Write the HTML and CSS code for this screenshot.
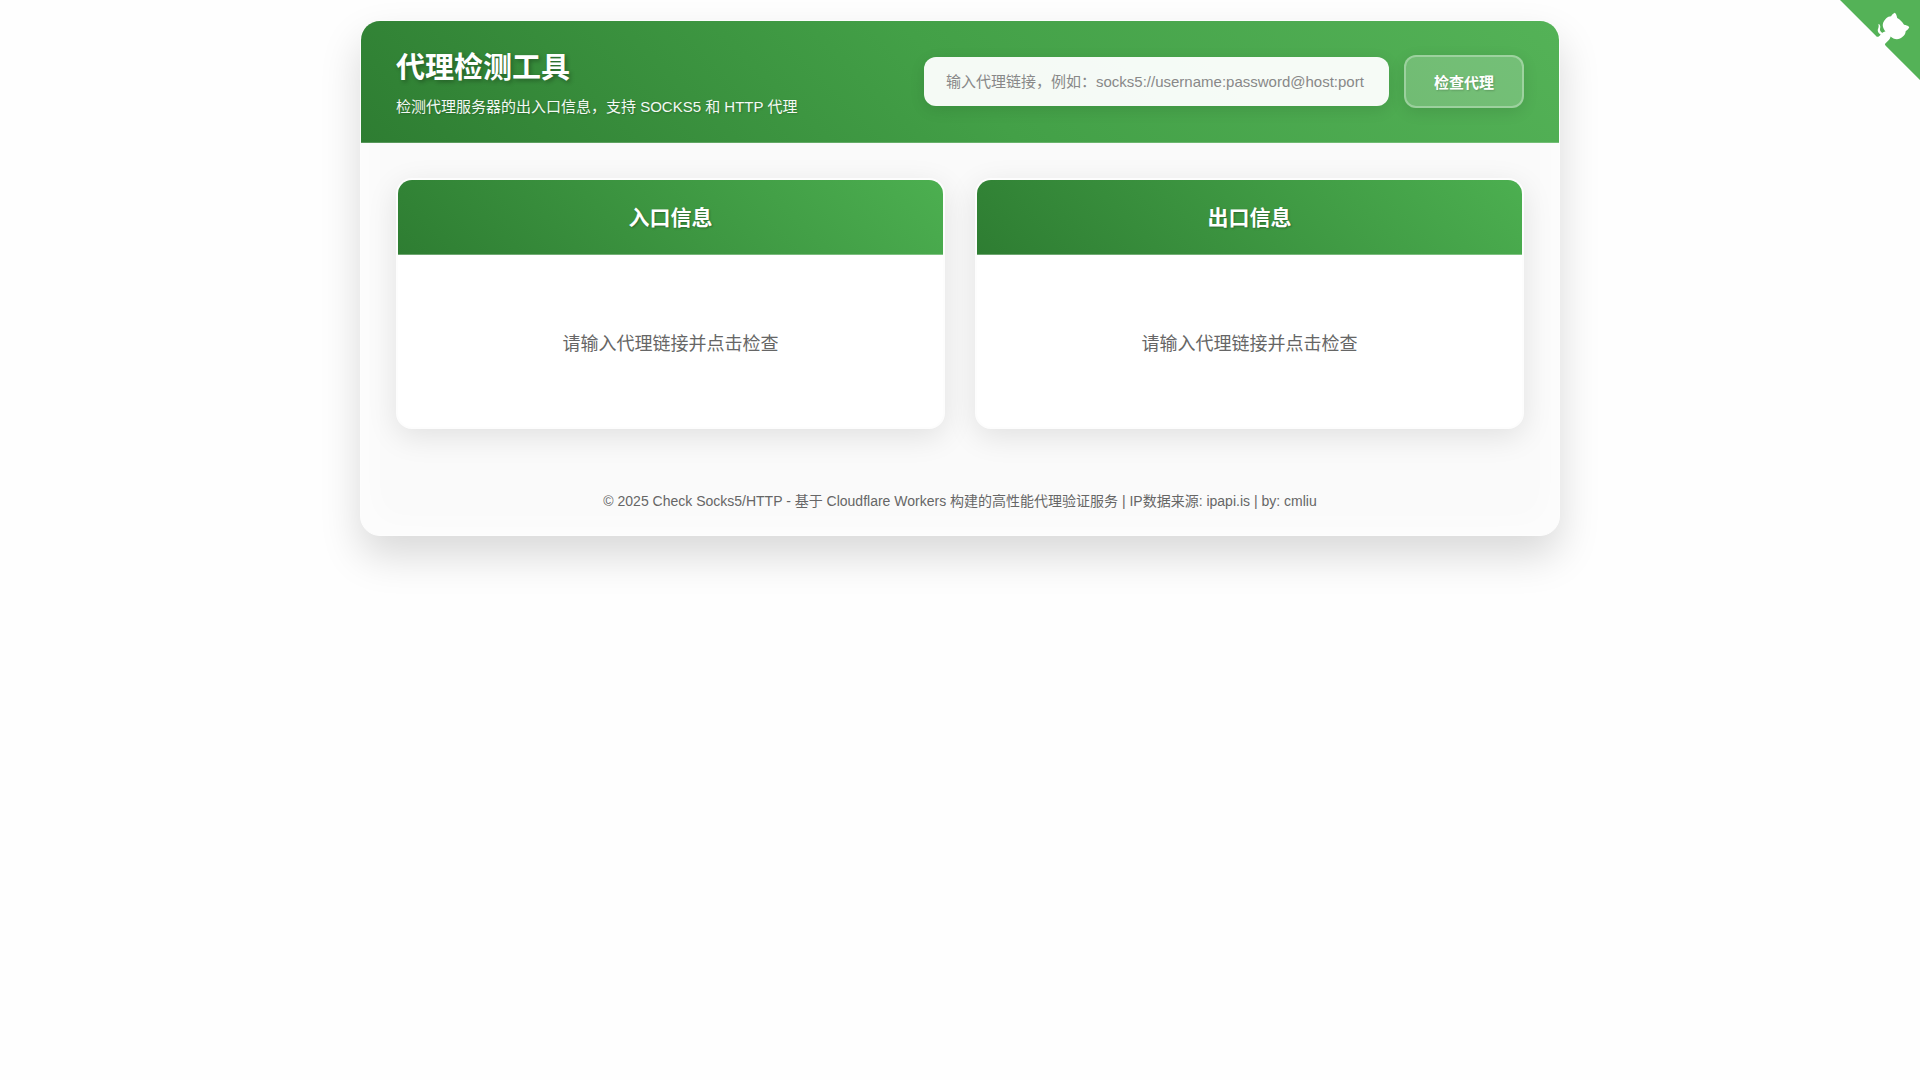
FILE: index.html
```html
<!DOCTYPE html>
<html lang="zh-CN">
<head>
<meta charset="UTF-8">
<meta name="viewport" content="width=device-width, initial-scale=1">
<title>代理检测工具</title>
<link rel="stylesheet" href="styles.css">
</head>
<body>
<a href="#" class="github-corner" aria-label="View source on Github">
<svg width="80" height="80" viewBox="0 0 250 250" aria-hidden="true"><path d="M0,0 L115,115 L130,115 L142,142 L250,250 L250,0 Z"/><path class="cat" d="M128.3,109.0 C113.8,99.7 119.0,89.6 119.0,89.6 C122.0,82.7 120.5,78.6 120.5,78.6 C119.2,72.0 123.4,76.3 123.4,76.3 C127.3,80.9 125.5,87.3 125.5,87.3 C122.9,97.6 130.6,101.9 134.4,103.2"/><path class="cat" d="M115.0,115.0 C114.9,115.1 118.7,116.5 119.8,115.4 L133.7,101.6 C136.9,99.2 139.9,98.4 142.2,98.6 C133.8,88.0 127.5,74.4 143.8,58.0 C148.5,53.4 154.0,51.2 159.7,51.0 C160.3,49.4 163.2,43.6 171.4,40.1 C171.4,40.1 176.1,42.5 178.8,56.2 C183.1,58.6 187.2,61.8 190.9,65.4 C194.5,69.0 197.7,73.2 200.1,77.6 C213.8,80.2 216.3,84.9 216.3,84.9 C212.7,93.1 206.9,96.0 205.4,96.6 C205.1,102.4 203.0,107.8 198.3,112.5 C181.9,128.9 168.3,122.5 157.7,114.1 C157.9,116.9 156.7,120.9 152.7,124.9 L141.0,136.5 C139.8,137.7 141.6,141.9 141.8,141.8 Z"/></svg>
</a>
<main class="container">
<header class="header">
<div class="titles">
<h1>代理检测工具</h1>
<p>检测代理服务器的出入口信息，支持 SOCKS5 和 HTTP 代理</p>
</div>
<form class="search">
<input type="text" class="link-input" aria-label="代理链接" placeholder="输入代理链接，例如：socks5://username:password@host:port">
<button type="button" class="check">检查代理</button>
</form>
</header>
<div class="results">
<section class="card"><h2>入口信息</h2><p>请输入代理链接并点击检查</p></section>
<section class="card"><h2>出口信息</h2><p>请输入代理链接并点击检查</p></section>
</div>
<footer class="footer">© 2025 Check Socks5/HTTP - 基于 Cloudflare Workers 构建的高性能代理验证服务 | IP数据来源: ipapi.is | by: cmliu</footer>
</main>
</body>
</html>
```
FILE: styles.css
```css
* { box-sizing: border-box; margin: 0; padding: 0; }
body {
  min-height: 100vh;
  padding: 20px;
  background: #fefefe;
  color: #666;
  font-family: "Liberation Sans", "Noto Sans CJK SC", sans-serif;
}
.container {
  max-width: 1200px;
  margin: 0 auto;
  overflow: hidden;
  border: 1px solid #fdfdfd;
  border-radius: 20px;
  background: #fafafa;
  box-shadow: 0 20px 40px rgba(0, 0, 0, 0.15), inset 0 0 40px #fefefe;
}
.header {
  display: flex;
  align-items: center;
  justify-content: space-between;
  gap: 30px;
  padding: 25px 35px;
  border-bottom: 1px solid rgba(255, 255, 255, 0.2);
  background: linear-gradient(45deg, #2e7d32, #43a047 50%, #54b257) border-box;
  color: #fff;
}
.titles h1 {
  margin-bottom: 6px;
  font-size: 29px;
  line-height: 45px;
  text-shadow: 2px 2px 4px rgba(0, 0, 0, 0.3);
}
.titles p {
  font-size: 15px;
  line-height: 20px;
  opacity: 0.95;
  text-shadow: 1px 1px 2px rgba(0, 0, 0, 0.2);
}
.search { display: flex; align-items: center; gap: 15px; width: 600px; }
.link-input {
  flex: 1;
  min-width: 0;
  height: 49px;
  padding: 0 22px;
  border: 0;
  border-radius: 12px;
  background: rgba(255, 255, 255, 0.95);
  box-shadow: 0 4px 15px rgba(0, 0, 0, 0.1);
  font: 15px "Liberation Sans", "Noto Sans CJK SC", sans-serif;
}
.link-input::placeholder { color: #888; }
.check {
  width: 120px;
  height: 53px;
  border: 2px solid rgba(255, 255, 255, 0.3);
  border-radius: 12px;
  background: rgba(255, 255, 255, 0.2);
  color: #fff;
  font: bold 15px "Liberation Sans", "Noto Sans CJK SC", sans-serif;
  text-shadow: 1px 1px 2px rgba(0, 0, 0, 0.2);
  box-shadow: 0 4px 15px rgba(0, 0, 0, 0.1);
}
.results {
  display: grid;
  grid-template-columns: 1fr 1fr;
  gap: 30px;
  padding: 35px;
}
.card {
  overflow: hidden;
  border: 2px solid #fdfdfd;
  border-radius: 16px;
  background: #fff;
  box-shadow: 0 8px 30px rgba(0, 0, 0, 0.1);
  text-align: center;
}
.card h2 {
  padding: 20px;
  background: linear-gradient(45deg, #2e7d32, #4caf50);
  box-shadow: inset 0 -1px 0 rgba(255, 255, 255, 0.3);
  color: #fff;
  font-size: 21px;
  line-height: 35px;
  text-shadow: 1px 1px 2px rgba(0, 0, 0, 0.3);
}
.card p { padding: 75px 20px 69px; font-size: 18px; line-height: 28px; }
.footer { padding: 27px 25px 23px; font-size: 14px; line-height: 21px; text-align: center; }
.github-corner { position: absolute; top: 0; right: 0; }
.github-corner svg { display: block; fill: #54b257; }
.github-corner .cat { fill: #fff; }
```
